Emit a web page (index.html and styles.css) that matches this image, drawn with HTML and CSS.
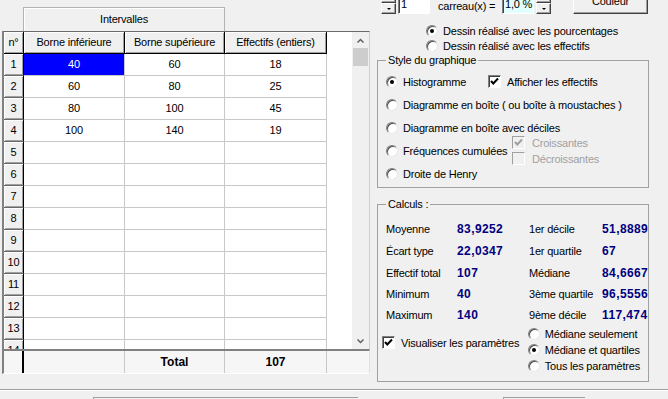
FILE: index.html
```html
<!DOCTYPE html>
<html lang="fr">
<head>
  <meta charset="UTF-8" />
  <title>Statistiques - Intervalles</title>
  <link rel="stylesheet" href="styles.css">
</head>
<body>
<div class="window">
  <div class="main">

    <!-- tableau des intervalles -->
    <section class="table-pane">
      <div class="caption">Intervalles</div>

      <div class="grid">
        <div class="sheet">
          <div class="hd">n°</div>
          <div class="hd">Borne inférieure</div>
          <div class="hd">Borne supérieure</div>
          <div class="hd">Effectifs (entiers)</div>

          <div class="rh">1</div><div class="sel">40</div><div>60</div><div>18</div>
          <div class="rh">2</div><div>60</div><div>80</div><div>25</div>
          <div class="rh">3</div><div>80</div><div>100</div><div>45</div>
          <div class="rh">4</div><div>100</div><div>140</div><div>19</div>
          <div class="rh">5</div><div></div><div></div><div></div>
          <div class="rh">6</div><div></div><div></div><div></div>
          <div class="rh">7</div><div></div><div></div><div></div>
          <div class="rh">8</div><div></div><div></div><div></div>
          <div class="rh">9</div><div></div><div></div><div></div>
          <div class="rh">10</div><div></div><div></div><div></div>
          <div class="rh">11</div><div></div><div></div><div></div>
          <div class="rh">12</div><div></div><div></div><div></div>
          <div class="rh">13</div><div></div><div></div><div></div>
          <div class="rh">14</div><div></div><div></div><div></div>
        </div>
        <div class="filler"></div>
        <div class="vscroll">
          <div class="sb-btn">
            <svg width="7" height="5" viewBox="0 0 7 5"><path d="M0.5 4.5L3.5 1.5L6.5 4.5" stroke="#606060" stroke-width="1.5" fill="none"/></svg>
          </div>
          <div class="thumb"></div>
          <div class="sb-track"></div>
          <div class="sb-btn">
            <svg width="7" height="5" viewBox="0 0 7 5"><path d="M0.5 0.5L3.5 3.5L6.5 0.5" stroke="#606060" stroke-width="1.5" fill="none"/></svg>
          </div>
        </div>
      </div>

      <div class="total">
        <div class="first"></div>
        <div></div>
        <div class="strong">Total</div>
        <div class="strong">107</div>
        <div class="last"></div>
      </div>
    </section>

    <!-- options du graphique -->
    <section class="options">
      <div class="toolbar">
        <div class="spin spin-a"><span class="up"></span><span class="down"><i></i></span></div>
        <div class="field field-a">1</div>
        <div class="label-carreau">carreau(x) =</div>
        <div class="field field-b">1,0 %</div>
        <div class="spin spin-b"><span class="up"></span><span class="down"><i></i></span></div>
        <div class="btn">Couleur</div>
      </div>

      <div class="mode">
        <div class="opt"><span class="radio on"></span>Dessin réalisé avec les pourcentages</div>
        <div class="opt"><span class="radio"></span>Dessin réalisé avec les effectifs</div>
      </div>

      <fieldset class="group style-group">
        <legend>Style du graphique</legend>
        <div class="row">
          <div class="opt w-histo"><span class="radio on"></span>Histogramme</div>
          <div class="opt"><span class="check on"><svg width="11" height="11" viewBox="0 0 11 11"><path d="M2 5L4.3 7.5L9 2.5" stroke="#000" stroke-width="2" fill="none"/></svg></span>Afficher les effectifs</div>
        </div>
        <div class="row">
          <div class="opt"><span class="radio"></span>Diagramme en boîte ( ou boîte à moustaches )</div>
        </div>
        <div class="row">
          <div class="opt"><span class="radio"></span>Diagramme en boîte avec déciles</div>
        </div>
        <div class="row">
          <div class="opt w-freq"><span class="radio"></span>Fréquences cumulées</div>
          <div class="stack">
            <div class="opt disabled"><span class="check off"><svg width="11" height="11" viewBox="0 0 11 11"><path d="M2 5L4.3 7.5L9 2.5" stroke="#a0a0a0" stroke-width="2" fill="none"/></svg></span>Croissantes</div>
            <div class="opt disabled"><span class="check off"></span>Décroissantes</div>
          </div>
        </div>
        <div class="row">
          <div class="opt"><span class="radio"></span>Droite de Henry</div>
        </div>
      </fieldset>

      <fieldset class="group calc-group">
        <legend>Calculs :</legend>
        <div class="calc">
          <span>Moyenne</span><b>83,9252</b><span>1er décile</span><b>51,8889</b>
          <span>Écart type</span><b>22,0347</b><span>1er quartile</span><b>67</b>
          <span>Effectif total</span><b>107</b><span>Médiane</span><b>84,6667</b>
          <span>Minimum</span><b>40</b><span>3ème quartile</span><b>96,5556</b>
          <span>Maximum</span><b>140</b><span>9ème décile</span><b>117,474</b>
        </div>
        <div class="calc-foot">
          <div class="opt visu"><span class="check on"><svg width="11" height="11" viewBox="0 0 11 11"><path d="M2 5L4.3 7.5L9 2.5" stroke="#000" stroke-width="2" fill="none"/></svg></span>Visualiser les paramètres</div>
          <div class="params">
            <div class="opt"><span class="radio"></span>Médiane seulement</div>
            <div class="opt"><span class="radio on"></span>Médiane et quartiles</div>
            <div class="opt"><span class="radio"></span>Tous les paramètres</div>
          </div>
        </div>
      </fieldset>
    </section>
  </div>

  <div class="status">
    <div class="pane pane-a"></div>
    <div class="pane pane-b"></div>
  </div>
</div>
</body>
</html>
```

FILE: styles.css
```css
body {
  margin: 0;
  background: #f0f0f0;
  font-family: "Liberation Sans", Arial, sans-serif;
  font-size: 11px;
  letter-spacing: -0.2px;
  color: #000;
}

.window {
  width: 668px;
  height: 399px;
  overflow: hidden;
}

.main {
  display: flex;
  height: 389px;
}

/* ---------- tableau ---------- */

.table-pane {
  width: 370px;
  flex: none;
}

.caption {
  box-sizing: border-box;
  margin: 7px 0 0 23px;
  width: 202px;
  height: 24px;
  border: 1px solid #b4b4b4;
  border-bottom: none;
  box-shadow: inset 1px 1px 0 #fff;
  text-align: center;
  line-height: 23px;
}

.grid {
  box-sizing: border-box;
  display: flex;
  margin-left: 2px;
  width: 368px;
  height: 318px;
  border-top: 1px solid #696969;
  border-left: 2px solid #808080;
  border-right: 1px solid #d0d0d0;
  background: #fff;
  overflow: hidden;
}

.sheet {
  display: grid;
  grid-template-columns: 20px 101px 100px 102px;
  grid-auto-rows: 22px;
  width: 323px;
  flex: none;
  align-content: start;
}

.sheet > div {
  box-sizing: border-box;
  border-right: 1px solid #c8c8c8;
  border-bottom: 1px solid #c8c8c8;
  text-align: center;
  line-height: 21px;
  white-space: nowrap;
}

.sheet > .hd,
.sheet > .rh {
  background: #f0f0f0;
  border-right: 1px solid #000;
  border-bottom: 1px solid #000;
  box-shadow: inset 1px 1px 0 #fff, inset -1px -1px 0 #a0a0a0;
}

.sheet > .rh {
  border-bottom-color: #696969;
}

.sheet > .sel {
  background: #0000ff;
  color: #fff;
}

.filler {
  flex: 1;
}

.vscroll {
  width: 17px;
  flex: none;
  display: flex;
  flex-direction: column;
  background: #f0f0f0;
}

.sb-btn {
  height: 16px;
  display: flex;
  align-items: center;
  justify-content: center;
}

.thumb {
  height: 18px;
  margin: 0 1px;
  background: #cdcdcd;
}

.sb-track {
  flex: 1;
}

.total {
  box-sizing: border-box;
  display: grid;
  grid-template-columns: 20px 101px 100px 102px 1fr;
  margin-left: 2px;
  width: 368px;
  height: 25px;
  border-top: 2px solid #808080;
  border-left: 2px solid #808080;
  border-right: 1px solid #e0e0e0;
  border-bottom: 1px solid #fff;
  background: #f6f6f6;
}

.total > div {
  border-right: 1px solid #c8c8c8;
  text-align: center;
  line-height: 22px;
}

.total > .first {
  border-right: 2px solid #000;
}

.total > .last {
  border-right: none;
}

.total > .strong {
  font-weight: bold;
  font-size: 12px;
  letter-spacing: 0;
}

/* ---------- options ---------- */

.options {
  flex: 1;
}

.toolbar {
  display: flex;
  align-items: flex-end;
  height: 24px;
  margin-top: -10px;
  white-space: nowrap;
}

.spin {
  display: flex;
  flex-direction: column;
  width: 15px;
  height: 22px;
}

.spin span {
  box-sizing: border-box;
  flex: 1;
  background: #f0f0f0;
  border: 1px solid;
  border-color: #fff #404040 #404040 #fff;
  box-shadow: inset -1px -1px 0 #a0a0a0;
  display: flex;
  align-items: center;
  justify-content: center;
}

.spin i {
  width: 0;
  height: 0;
  border-left: 2px solid transparent;
  border-right: 2px solid transparent;
  border-top: 2px solid #000;
  margin-top: 1px;
}

.spin-a {
  margin-left: 11px;
}

.spin-b {
  margin-left: 2px;
}

.field {
  box-sizing: border-box;
  height: 22px;
  width: 32px;
  padding: 1px 0 0 2px;
  border: 1px solid;
  border-color: #808080 #fff #fff #808080;
  box-shadow: inset 1px 1px 0 #404040;
  line-height: 20px;
  background: #fff;
  overflow: hidden;
}

.field-a {
  margin-left: 2px;
}

.field-b {
  background: #e1ffff;
}

.label-carreau {
  margin-left: 8px;
  width: 64px;
  height: 16px;
  line-height: 16px;
}

.btn {
  box-sizing: border-box;
  margin-left: 22px;
  width: 75px;
  height: 25px;
  border: 1px solid;
  border-color: #fff #404040 #404040 #fff;
  box-shadow: inset -1px -1px 0 #a0a0a0;
  text-align: center;
  line-height: 23px;
}

.mode {
  margin: 9px 0 0 56px;
}

.mode .opt {
  height: 15px;
}

.opt {
  display: flex;
  align-items: center;
  gap: 5px;
  white-space: nowrap;
}

.radio {
  box-sizing: border-box;
  flex: none;
  width: 12px;
  height: 12px;
  border-radius: 50%;
  background: #fff;
  border: 1px solid;
  border-color: #808080 #e8e8e8 #e8e8e8 #808080;
  box-shadow: inset 1px 1px 0 #505050;
  display: flex;
  align-items: center;
  justify-content: center;
}

.radio.on::after {
  content: "";
  width: 4px;
  height: 4px;
  border-radius: 50%;
  background: #000;
}

.check {
  box-sizing: border-box;
  flex: none;
  width: 13px;
  height: 13px;
  background: #fff;
  border: 1px solid;
  border-color: #808080 #fff #fff #808080;
  box-shadow: inset 1px 1px 0 #404040;
  display: flex;
  align-items: center;
  justify-content: center;
}

.check.off {
  background: #f0f0f0;
  border-color: #a0a0a0 #fff #fff #a0a0a0;
  box-shadow: none;
}

.opt .check {
  margin-right: 1px;
}

.disabled {
  color: #a0a0a0;
}

.group {
  box-sizing: border-box;
  margin: 0 0 0 7px;
  width: 272px;
  min-width: 0;
  border: 1px solid #a0a0a0;
}

.group legend {
  padding: 0 2px;
  line-height: 14px;
}

.style-group {
  padding: 3px 8px 2px 8px;
}

.style-group .row {
  display: flex;
  align-items: center;
  height: 23px;
}

.w-histo {
  width: 102px;
}

.w-freq {
  width: 126px;
}

.stack {
  display: flex;
  flex-direction: column;
  height: 32px;
  flex: none;
}

.stack .opt {
  height: 16px;
  gap: 6px;
}

.calc-group {
  margin-top: 9px;
  padding: 7px 8px 7px 8px;
}

.calc {
  display: grid;
  grid-template-columns: 71px 72px 73px 1fr;
  grid-template-rows: 22px 22px 22px 20px 22px;
  align-items: center;
  white-space: nowrap;
}

.calc b {
  color: #000080;
  font-size: 12px;
  letter-spacing: 0.4px;
}

.calc-foot {
  display: flex;
}

.visu {
  margin: 10px 0 0 -4px;
  width: 149px;
  height: 13px;
  align-self: flex-start;
}

.params .opt {
  height: 16px;
}

/* ---------- barre du bas ---------- */

.status {
  display: flex;
  height: 10px;
  padding-top: 7px;
  border-top: 1px solid #a0a0a0;
  box-shadow: inset 0 1px 0 #fff;
}

.pane {
  height: 10px;
  border-top: 1px solid #a0a0a0;
  border-left: 1px solid #a0a0a0;
}

.pane-a {
  margin-left: 93px;
  width: 264px;
}

.pane-b {
  margin-left: 145px;
  width: 81px;
}
```
